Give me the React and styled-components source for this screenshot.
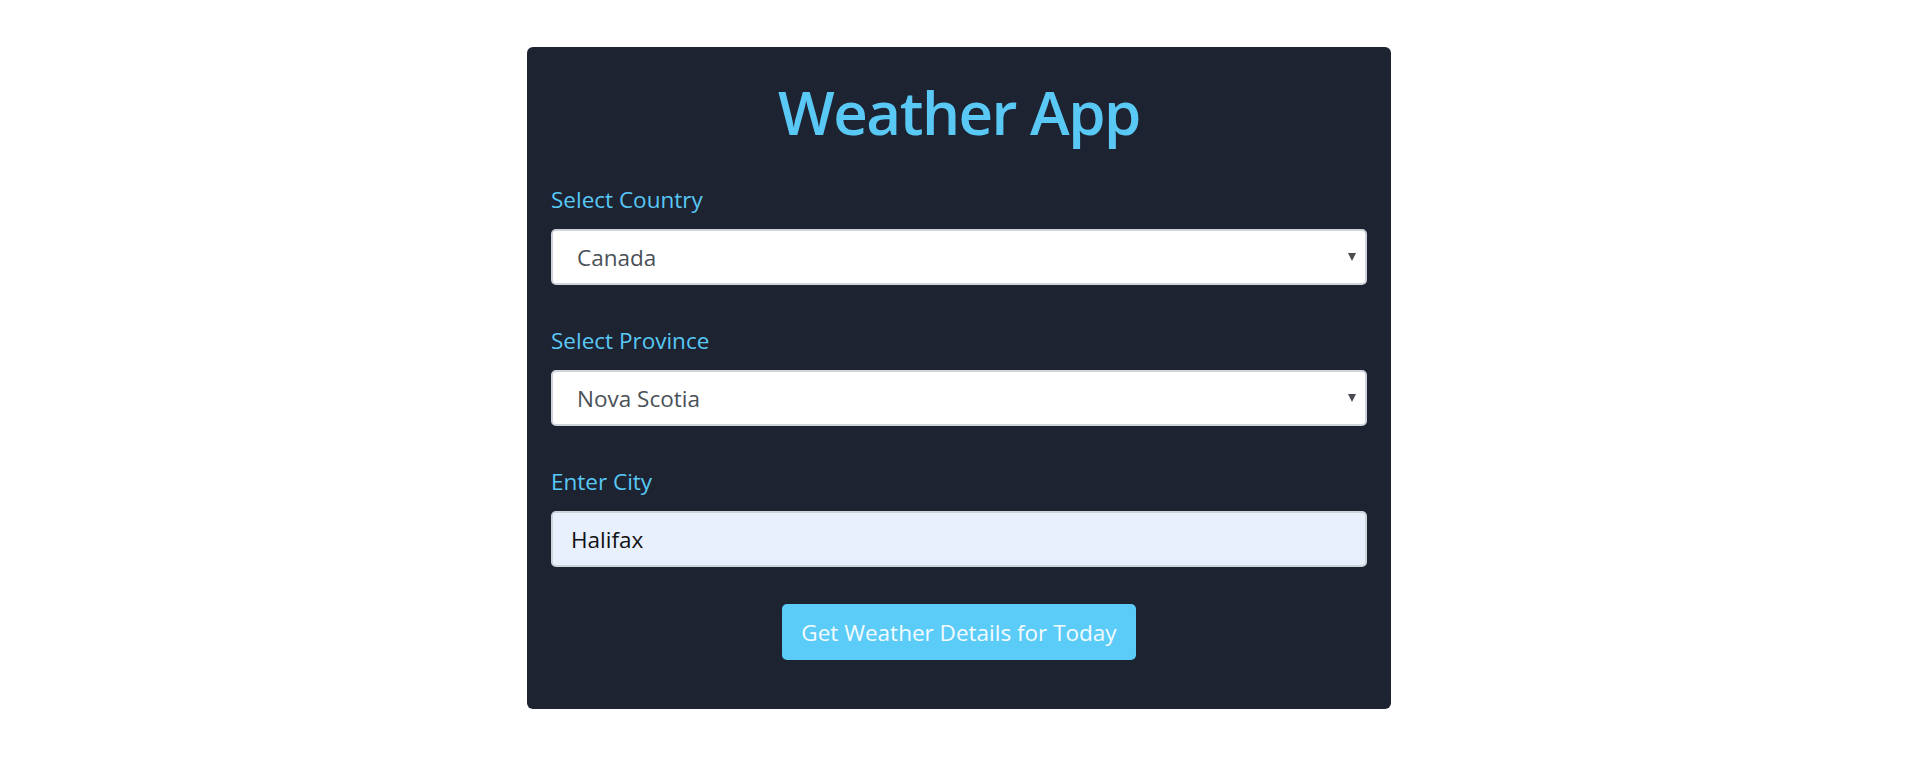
import React, { useState } from 'react';
import styled, { createGlobalStyle } from 'styled-components';

const GlobalStyle = createGlobalStyle`
  body {
    margin: 0;
    background: #ffffff;
    font-family: "Open Sans", "Noto Sans", sans-serif;
  }
  * { box-sizing: border-box; }
`;

const Page = styled.div`
  display: flex;
  justify-content: center;
  padding-top: 47px;
`;

const Card = styled.div`
  width: 864px;
  background-color: #1d2330;
  border-radius: 6px;
  padding: 25px 24px 49px;
  display: flex;
  flex-direction: column;
`;

const Title = styled.h1`
  margin: 0 0 33px;
  text-align: center;
  font-size: 60px;
  font-weight: 600;
  line-height: 80px;
  color: #59c8f5;
  letter-spacing: -1.5px;
`;

const Field = styled.div`
  display: flex;
  flex-direction: column;

  & + & {
    margin-top: 41px;
  }
`;

const Label = styled.label`
  font-size: 22.5px;
  line-height: 30px;
  color: #59c8f5;
  margin-bottom: 14px;
`;

const SelectWrap = styled.div`
  position: relative;
`;

const Select = styled.select`
  width: 100%;
  height: 56px;
  appearance: none;
  border: 2px solid #ced4da;
  border-radius: 5px;
  background: #ffffff;
  padding: 0 24px;
  font-family: inherit;
  font-size: 22.5px;
  color: #495057;
  outline: none;
`;

const Caret = styled.span`
  position: absolute;
  right: 11px;
  top: 50%;
  transform: translateY(-50%);
  width: 0;
  height: 0;
  border-left: 4px solid transparent;
  border-right: 4px solid transparent;
  border-top: 8px solid #4a4d52;
  pointer-events: none;
`;

const Input = styled.input`
  width: 100%;
  height: 56px;
  border: 2px solid #ced4da;
  border-radius: 5px;
  background: #e8f0fe;
  padding: 0 18px;
  font-family: inherit;
  font-size: 22.5px;
  color: #111;
  outline: none;
`;

const Actions = styled.div`
  display: flex;
  justify-content: center;
  margin-top: 37px;
`;

const Button = styled.button`
  height: 56px;
  padding: 0 19px;
  border: none;
  border-radius: 5px;
  background-color: #5accf7;
  color: #f4fbff;
  font-family: inherit;
  font-size: 22.5px;
  cursor: pointer;
`;

const App = () => {
  const [country, setCountry] = useState('Canada');
  const [province, setProvince] = useState('Nova Scotia');
  const [city, setCity] = useState('Halifax');

  return (
    <>
      <GlobalStyle />
      <Page>
        <Card>
          <Title>Weather App</Title>
          <Field>
            <Label>Select Country</Label>
            <SelectWrap>
              <Select value={country} onChange={(e) => setCountry(e.target.value)}>
                <option>Canada</option>
                <option>United States</option>
              </Select>
              <Caret />
            </SelectWrap>
          </Field>
          <Field>
            <Label>Select Province</Label>
            <SelectWrap>
              <Select value={province} onChange={(e) => setProvince(e.target.value)}>
                <option>Nova Scotia</option>
                <option>Ontario</option>
                <option>Quebec</option>
              </Select>
              <Caret />
            </SelectWrap>
          </Field>
          <Field>
            <Label>Enter City</Label>
            <Input value={city} onChange={(e) => setCity(e.target.value)} />
          </Field>
          <Actions>
            <Button>Get Weather Details for Today</Button>
          </Actions>
        </Card>
      </Page>
    </>
  );
};

export default App;
